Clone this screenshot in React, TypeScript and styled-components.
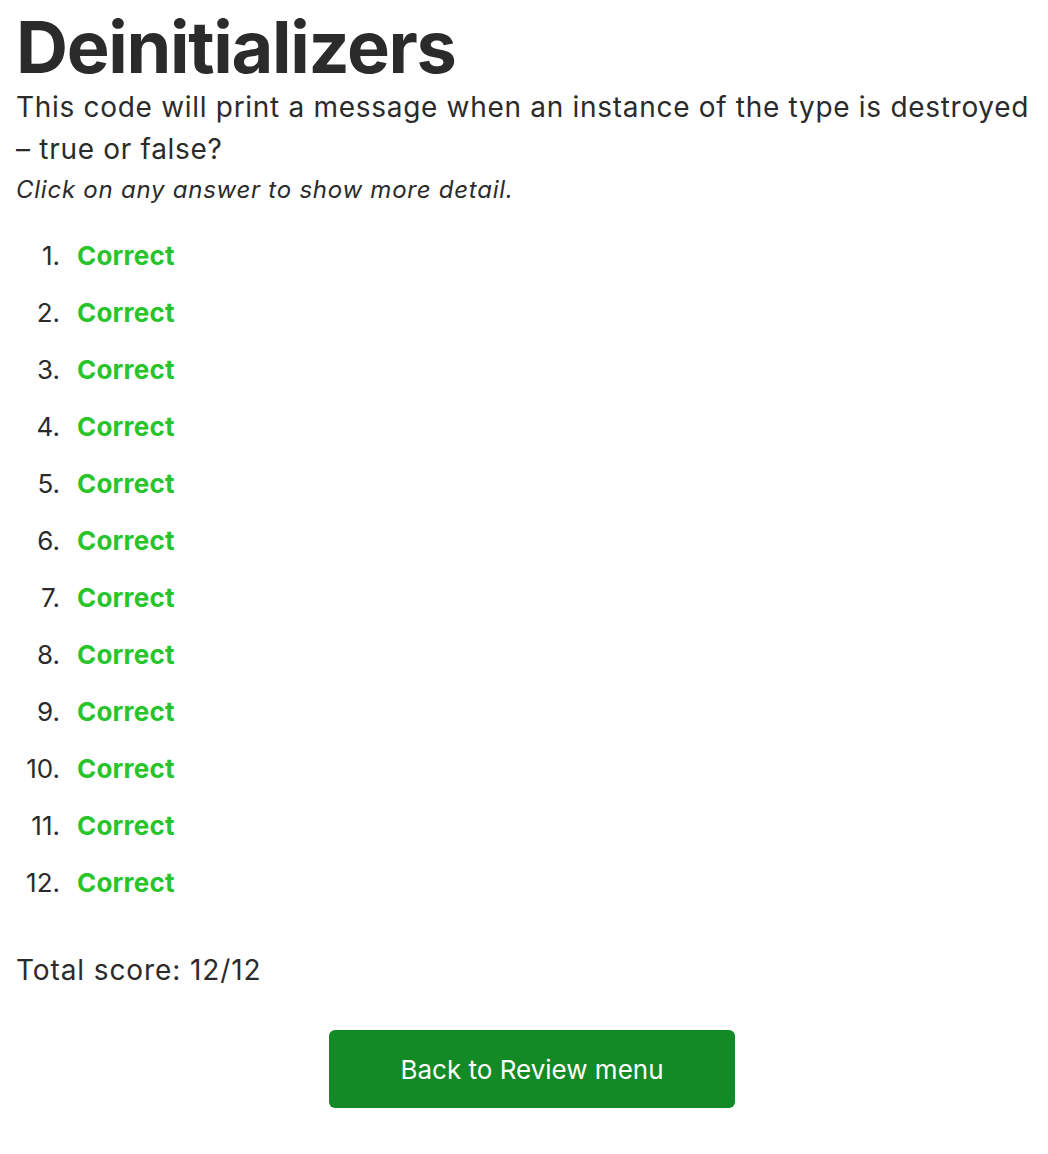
import styled, { createGlobalStyle } from 'styled-components';

const GlobalStyle = createGlobalStyle`
    body {
        margin: 0;
        background: #ffffff;
        font-family: Inter, "Noto Sans", sans-serif;
        color: #2b2b2b;
    }
`

const Page = styled.main`
    display: flex;
    flex-direction: column;
    padding: 11px 0 40px 16px;
`

const Title = styled.h1`
    font-size: 72px;
    font-weight: 700;
    line-height: 72px;
    letter-spacing: -1.3px;
    margin: 0;
`

const Question = styled.p`
    font-size: 28px;
    line-height: 42px;
    letter-spacing: 0.7px;
    margin: 3px 0 0;
`

const Hint = styled.p`
    font-size: 24px;
    line-height: 34px;
    font-style: italic;
    letter-spacing: 0.75px;
    margin: 3px 0 0;
`

const Answers = styled.ol`
    list-style: none;
    margin: 20px 0 0;
    padding: 0;
`

const Answer = styled.li`
    display: grid;
    grid-template-columns: 44px auto;
    column-gap: 17px;
    align-items: baseline;
    font-size: 26px;
    line-height: 57px;
`

const Number = styled.span`
    text-align: right;
`

const Verdict = styled.span<{ $correct: boolean }>`
    font-weight: 700;
    letter-spacing: 0.2px;
    color: ${p => (p.$correct ? '#28c42b' : '#d62d2d')};
`

const Score = styled.p`
    font-size: 28px;
    line-height: 42px;
    letter-spacing: 0.9px;
    margin: 38px 0 0;
`

const Actions = styled.div`
    display: flex;
    justify-content: center;
    margin-top: 39px;
`

const BackButton = styled.button`
    width: 406px;
    height: 78px;
    border: none;
    border-radius: 6px;
    background: #138a25;
    color: #ffffff;
    font-family: Inter, "Noto Sans", sans-serif;
    font-size: 26px;
    cursor: pointer;
`

const results = Array.from({ length: 12 }, () => true)

const App = () => (
    <>
        <GlobalStyle />
        <Page>
            <Title>Deinitializers</Title>
            <Question>
                This code will print a message when an instance of the type is destroyed – true or false?
            </Question>
            <Hint>Click on any answer to show more detail.</Hint>
            <Answers>
                {results.map((ok, i) => (
                    <Answer key={i}>
                        <Number>{i + 1}.</Number>
                        <Verdict $correct={ok}>{ok ? 'Correct' : 'Wrong'}</Verdict>
                    </Answer>
                ))}
            </Answers>
            <Score>Total score: {results.filter(Boolean).length}/{results.length}</Score>
            <Actions>
                <BackButton>Back to Review menu</BackButton>
            </Actions>
        </Page>
    </>
)

export default App
